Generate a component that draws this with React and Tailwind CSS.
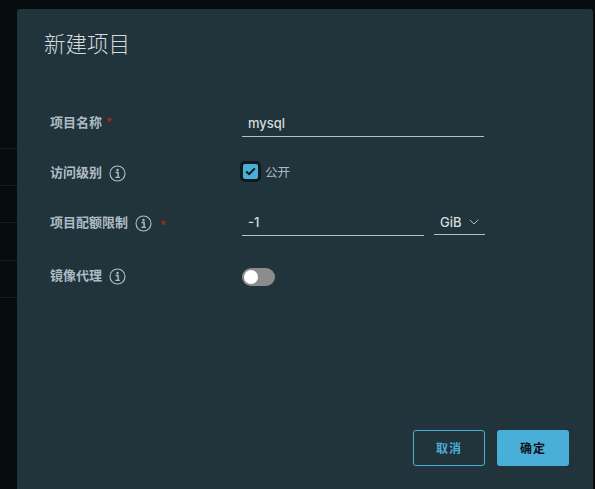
import { ChevronDown } from "lucide-react";

const font = { fontFamily: '"Noto Sans CJK SC", sans-serif' };
const valueFont = { fontFamily: 'Inter, "Noto Sans CJK SC", sans-serif' };

const InfoIcon = () => (
  <svg width="17" height="17" viewBox="0 0 17 17" fill="none" className="mt-[2px] shrink-0 text-[#b3bfc4]">
    <circle cx="8.5" cy="8.5" r="7.5" stroke="currentColor" strokeWidth="1.1" />
    <circle cx="8.5" cy="5" r="1.2" fill="currentColor" />
    <path d="M6.6 7.5h2.5v4.6M6.4 12.4h4.4" stroke="currentColor" strokeWidth="1.4" />
  </svg>
);

const Required = () => <span className="text-[12px] leading-[18px] font-bold text-[#a3291c]">*</span>;

const Label = ({ children }) => (
  <span className="text-[13px] leading-[18px] font-bold text-[#adbbc4]">{children}</span>
);

const App = () => {
  return (
    <div className="flex h-[489px] w-[595px] overflow-hidden bg-[#070c0f]" style={font}>
      {/* page behind the dialog */}
      <div className="w-[17px] shrink-0 pt-[148px]">
        <div className="h-[37px] border-t border-[#171d20]"></div>
        <div className="h-[37px] border-t border-[#171d20]"></div>
        <div className="h-[38px] border-t border-[#171d20]"></div>
        <div className="h-[37px] border-t border-[#171d20]"></div>
        <div className="h-[37px] border-t border-[#171d20]"></div>
      </div>

      <div className="mt-[9px] mr-[2px] flex flex-1 flex-col rounded-t-[3px] bg-[#21333b] pr-[24px] pb-[23px]">
        <h1 className="pt-[18px] pl-[27px] text-[21.5px] leading-[32px] font-light text-[#d5dcdf]">
          新建项目
        </h1>

        <div className="flex-1 pt-[49px] pl-[33px]">
          {/* name */}
          <div className="flex h-[44px] items-start">
            <div className="flex w-[192px] items-start gap-[4px] pt-[5px]">
              <Label>项目名称</Label>
              <Required />
            </div>
            <div
              className="h-[29px] w-[242px] border-b border-[#b4c0c4] pt-[5px] pl-[6px] text-[13px] leading-[20px] font-medium text-[#d5dcdf]"
              style={valueFont}
            >
              mysql
            </div>
          </div>

          {/* access level */}
          <div className="flex h-[49px] items-start pt-[9px]">
            <div className="flex w-[192px] items-start gap-[7px] pt-[2px]">
              <Label>访问级别</Label>
              <InfoIcon />
            </div>
            <div className="-ml-[2px] flex items-center gap-[4px]">
              <div className="flex size-[21px] items-center justify-center rounded-[5px] border-[3px] border-[#10191e] bg-[#49afd9]">
                <svg width="11" height="9" viewBox="0 0 11 9" fill="none">
                  <path d="M1.2 4.6 4.1 7.2 9.8 1.4" stroke="#0b1317" strokeWidth="2" />
                </svg>
              </div>
              <span className="text-[12.5px] leading-[18px] text-[#adbbc4]">公开</span>
            </div>
          </div>

          {/* quota */}
          <div className="flex h-[64px] items-start pt-[6px]">
            <div className="flex w-[192px] items-start pt-[6px]">
              <Label>项目配额限制</Label>
              <span className="ml-[7px]"><InfoIcon /></span>
              <span className="ml-[8px] -mt-[2px]"><Required /></span>
            </div>
            <div
              className="h-[29px] w-[182px] border-b border-[#b4c0c4] pt-[5px] pl-[6px] text-[13px] leading-[20px] font-medium text-[#d5dcdf]"
              style={valueFont}
            >
              -1
            </div>
            <div
              className="ml-[10px] flex h-[28px] w-[51px] items-start gap-[4px] border-b border-[#b4c0c4] pt-[5px] pl-[6px] text-[13px] leading-[20px] font-medium text-[#d5dcdf]"
              style={valueFont}
            >
              GiB
              <ChevronDown size={16} strokeWidth={1.3} className="mt-[2px] text-[#c5cfd3]" />
            </div>
          </div>

          {/* proxy */}
          <div className="flex items-start">
            <div className="flex w-[192px] items-start gap-[7px] pt-[1px]">
              <Label>镜像代理</Label>
              <InfoIcon />
            </div>
            <div className="mt-[3px] flex h-[18px] w-[33px] items-center rounded-full bg-[#8c8c8c] pl-[2px]">
              <div className="size-[14px] rounded-full bg-white"></div>
            </div>
          </div>
        </div>

        {/* footer */}
        <div className="flex justify-end gap-[12px]">
          <button className="h-[36px] w-[72px] rounded-[3px] border border-[#49afd9] text-[12px] font-bold tracking-[1px] text-[#49afd9]">
            取消
          </button>
          <button className="h-[36px] w-[72px] rounded-[3px] bg-[#49afd9] text-[12px] font-bold tracking-[1px] text-[#0b1317]">
            确定
          </button>
        </div>
      </div>
    </div>
  );
};

export default App;
